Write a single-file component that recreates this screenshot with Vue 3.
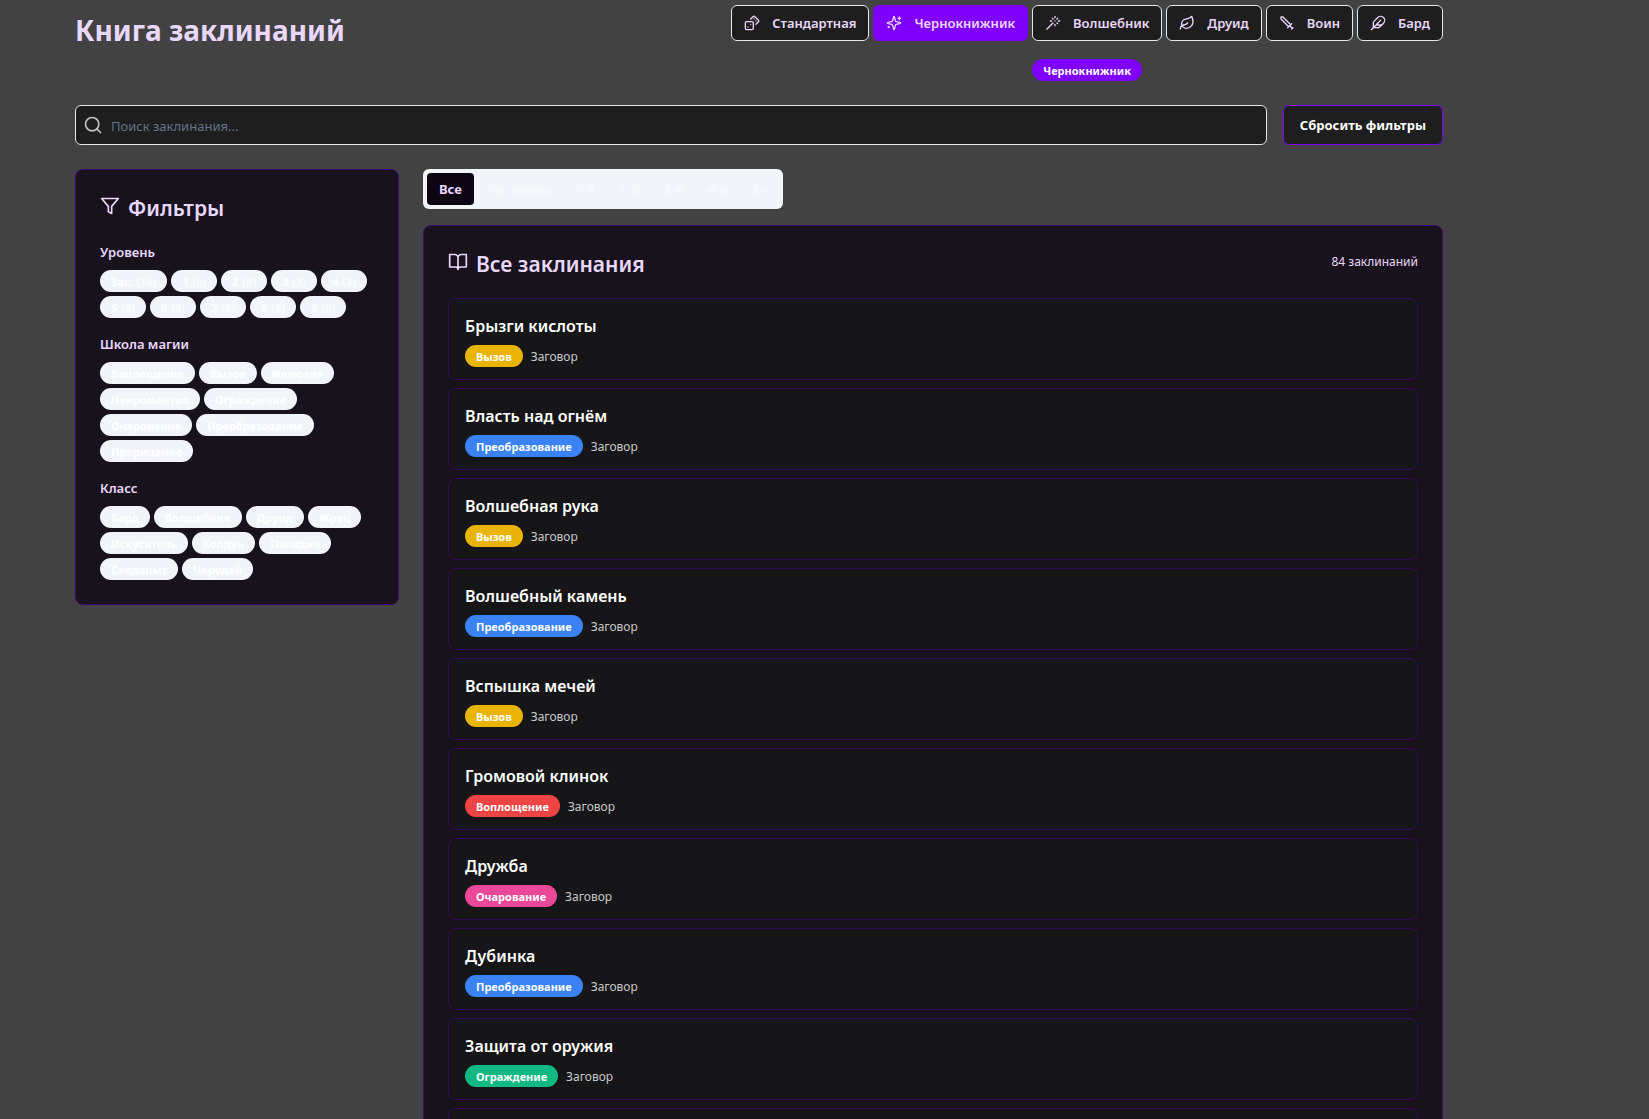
<script setup>
import { ref } from 'vue'

const themes = [
  { name: 'Стандартная', icon: 'dices' },
  { name: 'Чернокнижник', icon: 'sparkles' },
  { name: 'Волшебник', icon: 'wand' },
  { name: 'Друид', icon: 'leaf' },
  { name: 'Воин', icon: 'sword' },
  { name: 'Бард', icon: 'feather' }
]
const activeTheme = ref('Чернокнижник')
const query = ref('')

const icons = {
  dices: '<rect width="12" height="12" x="2" y="10" rx="2" ry="2"/><path d="m17.92 14 3.5-3.5a2.24 2.24 0 0 0 0-3l-5-4.92a2.24 2.24 0 0 0-3 0L10 6"/><path d="M6 18h.01M10 14h.01M15 6h.01M18 9h.01"/>',
  sparkles: '<path d="M9.937 15.5A2 2 0 0 0 8.5 14.063l-6.135-1.582a.5.5 0 0 1 0-.962L8.5 9.936A2 2 0 0 0 9.937 8.5l1.582-6.135a.5.5 0 0 1 .963 0L14.063 8.5A2 2 0 0 0 15.5 9.937l6.135 1.581a.5.5 0 0 1 0 .964L15.5 14.063a2 2 0 0 0-1.437 1.437l-1.582 6.135a.5.5 0 0 1-.963 0z"/><path d="M20 3v4M22 5h-4M4 17v2M5 18H3"/>',
  wand: '<path d="M15 4V2M15 16v-2M8 9h2M20 9h2M17.8 11.8 19 13M15 9h.01M17.8 6.2 19 5M3 21l9-9M12.2 6.2 11 5"/>',
  leaf: '<path d="M11 20A7 7 0 0 1 9.8 6.1C15.5 5 17 4.48 19 2c1 2 2 4.18 2 8 0 5.5-4.78 10-10 10Z"/><path d="M2 21c0-3 1.85-5.36 5.08-6C9.5 14.52 12 13 13 12"/>',
  sword: '<path d="M14.5 17.5 3 6V3h3l11.5 11.5M13 19l6-6M16 16l4 4M19 21l2-2"/>',
  feather: '<path d="M12.67 19a2 2 0 0 0 1.416-.588l6.154-6.172a6 6 0 0 0-8.49-8.49L5.586 9.914A2 2 0 0 0 5 11.328V18a1 1 0 0 0 1 1z"/><path d="M16 8 2 22M17.5 15H9"/>'
}

const filters = [
  {
    title: 'Уровень',
    options: [
      ['Заг.', 14], ['1', 6], ['2', 8], ['3', 7], ['4', 8],
      ['5', 8], ['6', 8], ['7', 8], ['8', 8], ['9', 9]
    ]
  },
  {
    title: 'Школа магии',
    options: [
      ['Воплощение'], ['Вызов'], ['Иллюзия'], ['Некромантия'], ['Ограждение'],
      ['Очарование'], ['Преобразование'], ['Прорицание']
    ]
  },
  {
    title: 'Класс',
    options: [
      ['Бард'], ['Волшебник'], ['Друид'], ['Жрец'], ['Искуситель'],
      ['Колдун'], ['Паладин'], ['Следопыт'], ['Чародей']
    ]
  }
]

const tabs = ['Все', 'Заговоры', '1-й', '2-й', '3-й', '4-й', '5+']
const activeTab = ref('Все')

const schoolClass = {
  'Вызов': 'conjuration',
  'Преобразование': 'transmutation',
  'Воплощение': 'evocation',
  'Очарование': 'enchantment',
  'Ограждение': 'abjuration'
}
const spells = [
  ['Брызги кислоты', 'Вызов'],
  ['Власть над огнём', 'Преобразование'],
  ['Волшебная рука', 'Вызов'],
  ['Волшебный камень', 'Преобразование'],
  ['Вспышка мечей', 'Вызов'],
  ['Громовой клинок', 'Воплощение'],
  ['Дружба', 'Очарование'],
  ['Дубинка', 'Преобразование'],
  ['Защита от оружия', 'Ограждение'],
  ['Злая насмешка', 'Очарование']
]
</script>

<template>
  <div class="page">
    <header class="header">
      <h1>Книга заклинаний</h1>
      <div class="themes">
        <div class="theme-row">
          <button
            v-for="t in themes"
            :key="t.name"
            type="button"
            class="theme"
            :class="{ active: t.name === activeTheme }"
            @click="activeTheme = t.name"
          >
            <svg class="icon" viewBox="0 0 24 24" aria-hidden="true" v-html="icons[t.icon]"></svg>
            <span>{{ t.name }}</span>
          </button>
        </div>
        <span class="pill current">{{ activeTheme }}</span>
      </div>
    </header>

    <div class="search-row">
      <label class="search">
        <svg class="icon" viewBox="0 0 24 24" aria-hidden="true"><circle cx="11" cy="11" r="8" /><path d="m21 21-4.3-4.3" /></svg>
        <input v-model="query" type="text" placeholder="Поиск заклинания..." aria-label="Поиск заклинания" />
      </label>
      <button type="button" class="reset" @click="query = ''">Сбросить фильтры</button>
    </div>

    <div class="columns">
      <aside class="card">
        <h2>
          <svg class="icon" viewBox="0 0 24 24" aria-hidden="true"><path d="M22 3H2l8 9.46V19l4 2v-8.54L22 3z" /></svg>
          Фильтры
        </h2>
        <div class="groups">
          <section v-for="group in filters" :key="group.title">
            <h3>{{ group.title }}</h3>
            <div class="pills">
              <button v-for="[name, count] in group.options" :key="name" type="button" class="pill option">
                {{ name }} <span v-if="count" class="count">({{ count }})</span>
              </button>
            </div>
          </section>
        </div>
      </aside>

      <main class="results">
        <div class="tabs" role="tablist">
          <button
            v-for="tab in tabs"
            :key="tab"
            type="button"
            role="tab"
            :aria-selected="tab === activeTab"
            class="tab"
            :class="{ active: tab === activeTab }"
            @click="activeTab = tab"
          >{{ tab }}</button>
        </div>
        <div class="card">
          <div class="card-head">
            <h2>
              <svg class="icon" viewBox="0 0 24 24" aria-hidden="true"><path d="M2 3h6a4 4 0 0 1 4 4v14a3 3 0 0 0-3-3H2zM22 3h-6a4 4 0 0 0-4 4v14a3 3 0 0 1 3-3h7z" /></svg>
              Все заклинания
            </h2>
            <span class="total">84 заклинаний</span>
          </div>
          <ul class="spells">
            <li v-for="[name, school] in spells" :key="name" class="spell">
              <h3>{{ name }}</h3>
              <div class="meta">
                <span class="pill" :class="schoolClass[school]">{{ school }}</span>
                <span class="level">Заговор</span>
              </div>
            </li>
          </ul>
        </div>
      </main>
    </div>
  </div>
</template>

<style>
body {
  background: #424242;
}
</style>

<style scoped>
* {
  box-sizing: border-box;
}
.page {
  max-width: 1400px;
  margin-left: 59px;
  padding: 5px 16px 24px;
  font-family: "Noto Sans", "Open Sans", sans-serif;
  font-size: 13px;
  line-height: 20px;
  color: #e9d8fd;
}
h1, h2, h3, ul {
  margin: 0;
  padding: 0;
}
button, input {
  font: inherit;
  color: inherit;
}
button {
  cursor: pointer;
  white-space: nowrap;
}
.icon {
  flex: none;
  width: 16px;
  height: 16px;
  fill: none;
  stroke: currentColor;
  stroke-width: 2;
  stroke-linecap: round;
  stroke-linejoin: round;
}
.header {
  display: flex;
  justify-content: space-between;
  align-items: flex-start;
}
h1 {
  padding-top: 7px;
  font-size: 28px;
  line-height: 36px;
  font-weight: 700;
}
.themes {
  display: flex;
  flex-direction: column;
  align-items: center;
  gap: 18px;
}
.theme-row {
  display: flex;
  gap: 4px;
}
.theme {
  display: flex;
  align-items: center;
  gap: 12px;
  height: 36px;
  padding: 0 12px;
  border: 1px solid #e2e8f0;
  border-radius: 6px;
  background: #1e1e1e;
  font-weight: 600;
}
.theme.active {
  border-color: #8000ff;
  background: #8000ff;
}
.pill {
  display: inline-flex;
  align-items: center;
  height: 22px;
  padding: 1px 10px 0;
  border: 1px solid transparent;
  border-radius: 11px;
  font-size: 11px;
  line-height: 16px;
  font-weight: 700;
  white-space: nowrap;
  color: #fff;
}
.current {
  background: #8000ff;
}
.search-row {
  display: flex;
  gap: 16px;
  margin: 24px 0;
}
.search {
  display: flex;
  flex: 1;
  align-items: center;
  gap: 8px;
  height: 40px;
  padding: 0 7px;
  border: 1px solid #e2e8f0;
  border-radius: 6px;
  background: #1e1e1e;
}
.search .icon {
  width: 20px;
  height: 20px;
  color: #c0c0c0;
}
.search input {
  flex: 1;
  min-width: 0;
  padding: 2px 0 0;
  border: 0;
  outline: 0;
  background: none;
}
.search input::placeholder {
  color: #64748b;
}
.reset {
  height: 40px;
  padding: 0 16px;
  border: 1px solid #8000ff;
  border-radius: 6px;
  background: #1e1e1e;
  font-weight: 700;
  color: #fff;
}
.columns {
  display: grid;
  grid-template-columns: repeat(4, minmax(0, 1fr));
  gap: 24px;
  align-items: start;
}
.results {
  grid-column: span 3;
}
.card {
  padding: 24px;
  border: 1px solid #3c0a6b;
  border-radius: 8px;
  background: #18121c;
}
h2 {
  display: flex;
  align-items: center;
  gap: 8px;
  font-size: 21px;
  line-height: 28px;
  font-weight: 600;
}
h2 .icon {
  width: 20px;
  height: 20px;
  margin-bottom: 4px;
}
.groups {
  display: flex;
  flex-direction: column;
  gap: 16px;
  margin-top: 20px;
}
.groups h3 {
  margin-bottom: 8px;
  font-size: 13px;
  line-height: 20px;
  font-weight: 600;
}
.pills {
  display: flex;
  flex-wrap: wrap;
  gap: 4px;
}
.option {
  gap: 4px;
  background: #f1f5f9;
}
.count {
  opacity: 0.7;
}
.tabs {
  display: inline-flex;
  height: 40px;
  margin-bottom: 16px;
  padding: 4px;
  border-radius: 6px;
  background: #f1f5f9;
  vertical-align: top;
}
.tab {
  padding: 0 12px;
  border: 0;
  border-radius: 4px;
  background: none;
  font-weight: 700;
  color: #f8f8fc;
}
.tab.active {
  background: #0d0514;
  color: #e9d8fd;
}
.card-head {
  display: flex;
  justify-content: space-between;
  align-items: center;
  margin-bottom: 20px;
}
.total {
  padding-bottom: 4px;
  font-size: 12px;
}
.spells {
  display: flex;
  flex-direction: column;
  gap: 8px;
  list-style: none;
}
.spell {
  padding: 13px 16px 12px;
  border: 1px solid #340a5c;
  border-radius: 8px;
  background: #161618;
  color: #fff;
}
.spell h3 {
  margin-bottom: 5px;
  font-size: 16px;
  line-height: 28px;
  font-weight: 600;
}
.meta {
  display: flex;
  align-items: center;
  gap: 8px;
}
.level {
  padding-top: 2px;
  font-size: 12px;
  line-height: 16px;
  color: #c8c8c8;
}
.conjuration { background: #eab308; }
.transmutation { background: #3b82f6; }
.evocation { background: #ef4444; }
.enchantment { background: #ec4899; }
.abjuration { background: #10b981; }
</style>
